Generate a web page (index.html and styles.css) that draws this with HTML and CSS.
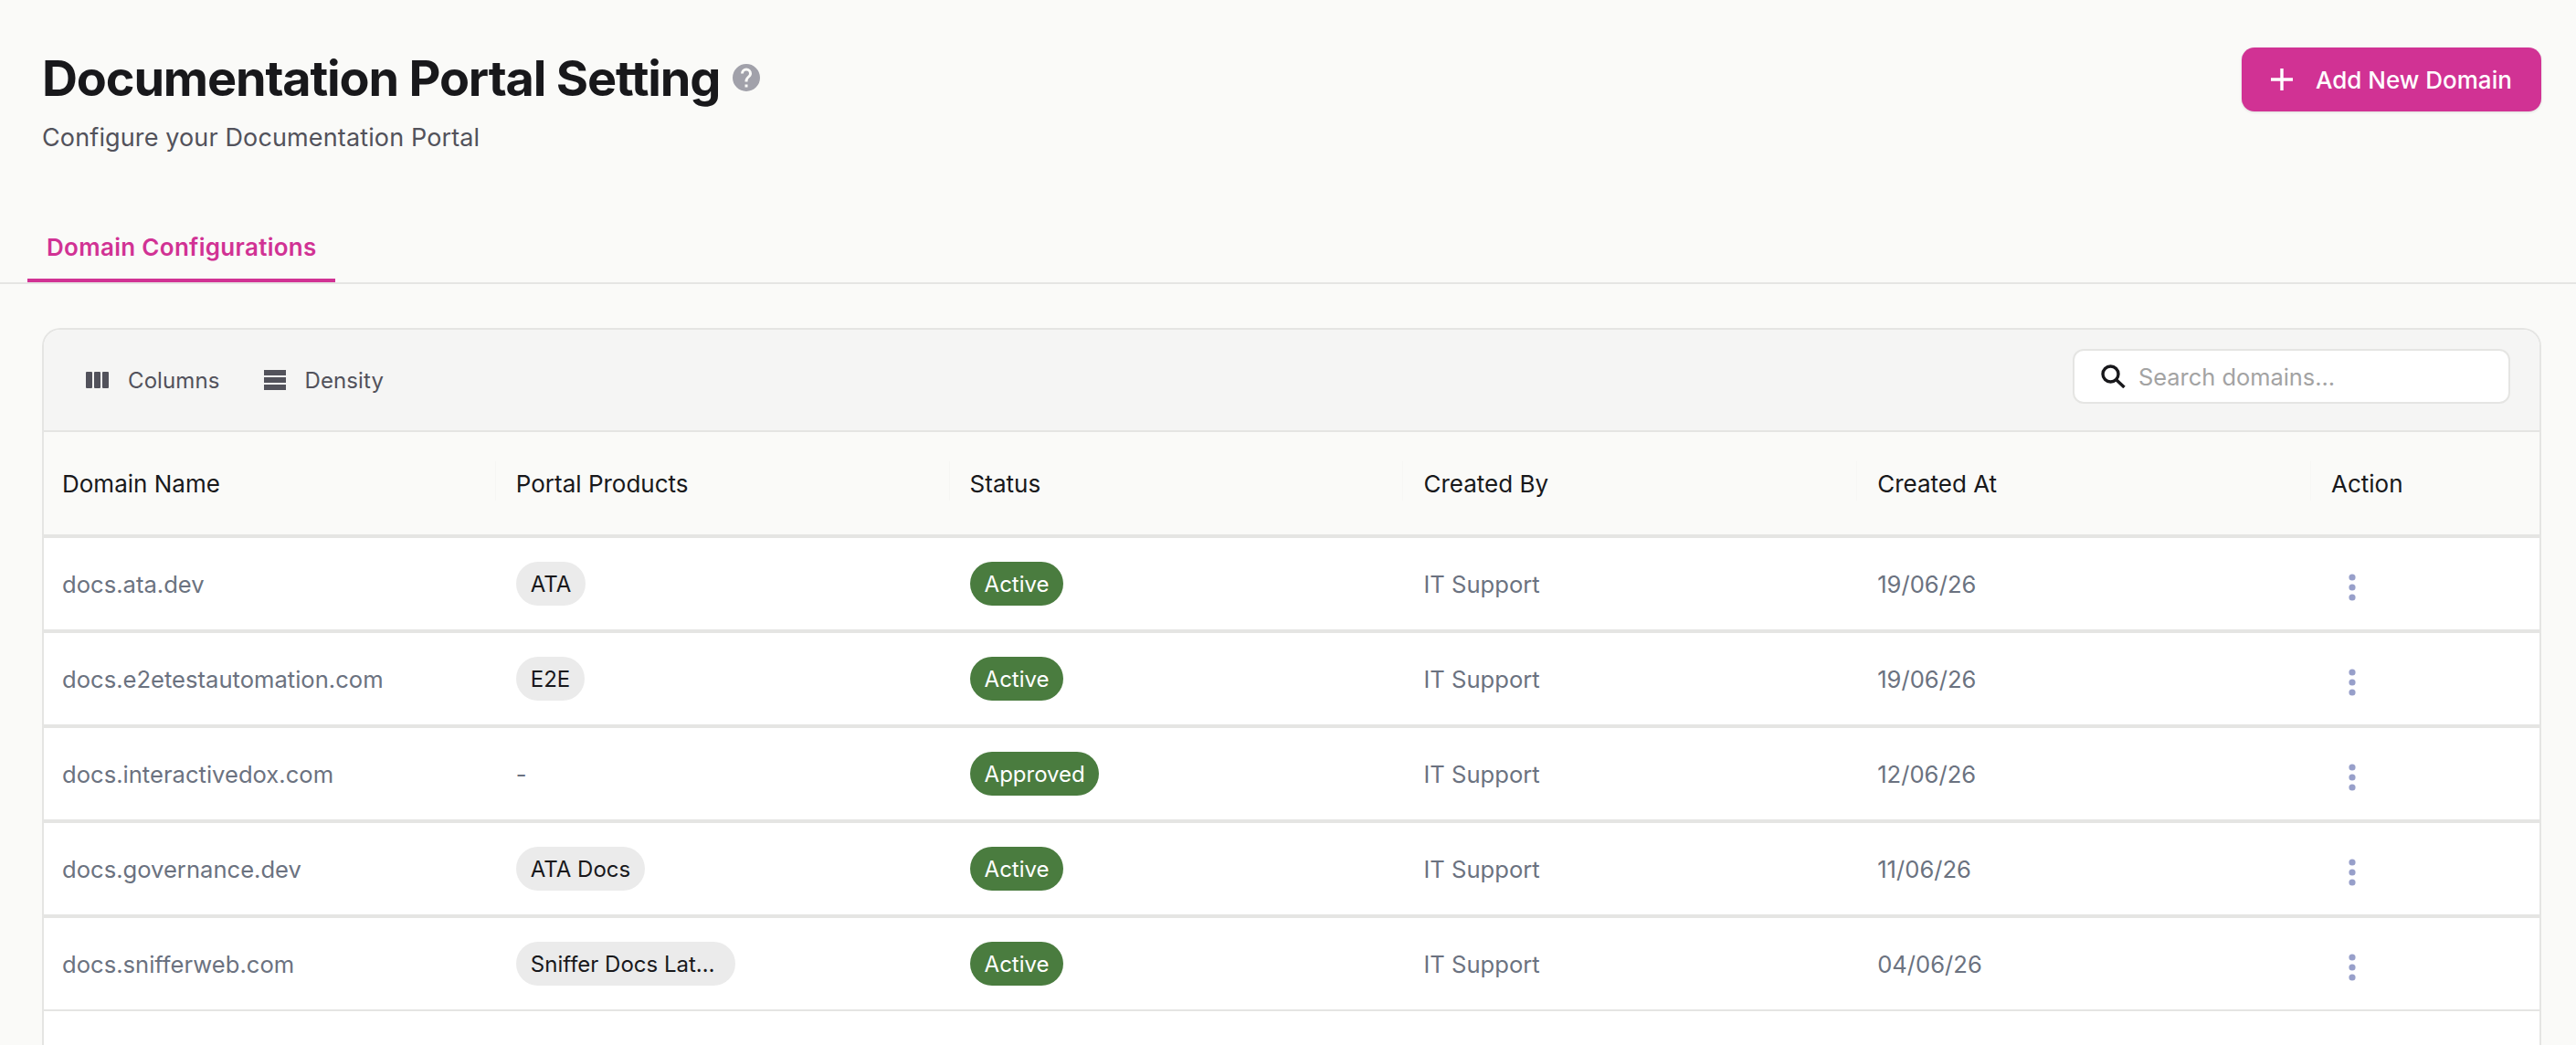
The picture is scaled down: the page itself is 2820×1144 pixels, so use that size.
FILE: index.html
```html
<!DOCTYPE html>
<html lang="en">
<head>
  <meta charset="UTF-8" />
  <title>Documentation Portal Setting</title>
  <link rel="stylesheet" href="styles.css">
</head>
<body>
  <header class="page-head">
    <div>
      <div class="title-row">
        <h1>Documentation Portal Setting</h1>
        <svg class="help-icon" viewBox="0 0 24 24"><path d="M12 2a10 10 0 1 0 0 20 10 10 0 0 0 0-20zm1 17h-2v-2h2v2zm2.07-7.75-.9.92C13.45 12.9 13 13.5 13 15h-2v-.5c0-1.1.45-2.1 1.17-2.83l1.24-1.26A2 2 0 0 0 14 9a2 2 0 0 0-4 0H8a4 4 0 0 1 8 0c0 .88-.36 1.68-.93 2.25z"/></svg>
      </div>
      <p class="subtitle">Configure your Documentation Portal</p>
    </div>
    <button class="add-btn">
      <svg class="plus-icon" viewBox="0 0 24 24"><path d="M12 0v24M0 12h24"/></svg>
      Add New Domain
    </button>
  </header>

  <nav class="tabs">
    <a class="tab active">Domain Configurations</a>
  </nav>

  <section class="card">
    <div class="toolbar">
      <div class="tool-group">
        <span class="tool">
          <svg class="tool-icon columns" viewBox="0 0 25 18"><rect width="7" height="18" rx="1"/><rect x="9" width="7" height="18" rx="1"/><rect x="18" width="7" height="18" rx="1"/></svg>
          Columns
        </span>
        <span class="tool">
          <svg class="tool-icon density" viewBox="0 0 24 22"><rect width="24" height="6"/><rect y="8" width="24" height="6"/><rect y="16" width="24" height="6"/></svg>
          Density
        </span>
      </div>
      <div class="search">
        <svg class="search-icon" viewBox="0 0 27 26"><circle cx="10.5" cy="10.5" r="8.5"/><path d="M17 17l8.5 8"/></svg>
        <span>Search domains...</span>
      </div>
    </div>

    <div class="row head">
      <div class="cell">Domain Name</div>
      <div class="cell">Portal Products</div>
      <div class="cell">Status</div>
      <div class="cell">Created By</div>
      <div class="cell">Created At</div>
      <div class="cell">Action</div>
    </div>

    <div id="rows"></div>
  </section>

  <script>
    const domains = [
      { name: "docs.ata.dev", product: "ATA", status: "Active", date: "19/06/26" },
      { name: "docs.e2etestautomation.com", product: "E2E", status: "Active", date: "19/06/26" },
      { name: "docs.interactivedox.com", product: "", status: "Approved", date: "12/06/26" },
      { name: "docs.governance.dev", product: "ATA Docs", status: "Active", date: "11/06/26" },
      { name: "docs.snifferweb.com", product: "Sniffer Docs Lat…", cut: true, status: "Active", date: "04/06/26" }
    ];

    const rows = document.getElementById('rows');

    domains.forEach(d => {
      const row = document.createElement('div');
      row.className = 'row';
      row.innerHTML = `
        <div class="cell">${d.name}</div>
        <div class="cell">${d.product ? `<span class="chip${d.cut ? ' chip-cut' : ''}">${d.product}</span>` : '-'}</div>
        <div class="cell"><span class="status">${d.status}</span></div>
        <div class="cell">IT Support</div>
        <div class="cell">${d.date}</div>
        <div class="cell"><svg class="dots" viewBox="0 0 8 30"><circle cx="4" cy="4" r="3.6"/><circle cx="4" cy="15" r="3.6"/><circle cx="4" cy="26" r="3.6"/></svg></div>
      `;
      rows.appendChild(row);
    });
  </script>
</body>
</html>
```

FILE: styles.css
```css
html, body {
  height: 100%;
  overflow: hidden;
}

body {
  margin: 0;
  font-family: Inter, "Liberation Sans", sans-serif;
  background: #fafaf8;
  color: #18181b;
}

.page-head {
  display: flex;
  justify-content: space-between;
  align-items: flex-start;
  padding: 52px 38px 0 46px;
  height: 205px;
  box-sizing: border-box;
}

.title-row {
  display: flex;
  align-items: center;
  gap: 11px;
  height: 66px;
}

h1 {
  margin: 0;
  font-size: 54px;
  font-weight: 700;
  letter-spacing: -1.17px;
  color: #18181b;
}

.help-icon {
  width: 36px;
  height: 36px;
  fill: #a1a1aa;
}

.subtitle {
  margin: 16px 0 0;
  font-size: 27px;
  letter-spacing: 0.13px;
  color: #52525b;
}

.add-btn {
  display: flex;
  align-items: center;
  gap: 25px;
  height: 70px;
  width: 328px;
  padding: 0 32px;
  border: none;
  border-radius: 14px;
  background: #d13294;
  color: #fff;
  font-family: inherit;
  font-size: 26px;
  font-weight: 500;
  box-shadow: 0 1px 3px rgba(0,0,0,0.12);
}

.plus-icon {
  width: 24px;
  height: 24px;
  stroke: #fff;
  stroke-width: 3.4;
  fill: none;
}

.tabs {
  display: flex;
  height: 106px;
  padding-left: 30px;
  border-bottom: 2px solid #e5e5e3;
  margin-top: -2px;
}

.tab {
  display: flex;
  align-items: center;
  height: 106px;
  padding: 33px 20px 0 21px;
  box-sizing: border-box;
  border-bottom: 4px solid #d13294;
  color: #d13294;
  font-size: 26px;
  font-weight: 600;
  letter-spacing: 0.3px;
}

.card {
  height: 785px;
  box-sizing: border-box;
  margin: 48px 38px 0 46px;
  border: 2px solid #e5e5e3;
  border-bottom: none;
  border-radius: 20px 20px 0 0;
  background: #fff;
  overflow: hidden;
}

.toolbar {
  display: flex;
  justify-content: space-between;
  height: 110px;
  padding: 0 32px 0 46px;
  background: #f5f5f4;
  border-bottom: 2px solid #e5e5e3;
}

.tool-group {
  display: flex;
  gap: 48px;
}

.tool {
  display: flex;
  align-items: center;
  gap: 21px;
  font-size: 24px;
  letter-spacing: 0.1px;
  color: #52525b;
}

.tool-icon {
  fill: #52525b;
}

.columns {
  width: 25px;
  height: 18px;
}

.density {
  width: 24px;
  height: 22px;
}

.search {
  display: flex;
  align-items: center;
  gap: 14px;
  width: 479px;
  height: 60px;
  margin-top: 21px;
  padding-left: 29px;
  box-sizing: border-box;
  border: 2px solid #e5e5e3;
  border-radius: 12px;
  background: #fff;
  font-size: 25.4px;
  color: #a3a3a3;
}

.search-icon {
  width: 27px;
  height: 26px;
  fill: none;
  stroke: #18181b;
  stroke-width: 3.4;
}

.row {
  display: grid;
  grid-template-columns: repeat(5, 496.8px) 1fr;
  height: 100px;
  background: #fff;
  border-bottom: 4px solid #e5e5e3;
  font-size: 25.6px;
  color: #6b7280;
}

.row:last-child {
  border-bottom-width: 2px;
}

.row.head {
  height: 112px;
  background: #fafaf8;
  color: #18181b;
  font-size: 26px;
}

.cell {
  display: flex;
  align-items: center;
  padding-left: 20px;
  overflow: hidden;
  white-space: nowrap;
}

.head .cell {
  position: relative;
}

.head .cell::after {
  content: "";
  position: absolute;
  right: 2px;
  top: 32px;
  height: 43px;
  border-right: 1px solid #f6f6f4;
}

.head .cell:last-child::after {
  display: none;
}

.chip {
  display: flex;
  align-items: center;
  height: 48px;
  padding: 0 16px;
  border-radius: 24px;
  background: #ebebeb;
  color: #18181b;
  font-size: 24px;
}

.chip-cut {
  padding-right: 22px;
}

.status {
  display: flex;
  align-items: center;
  height: 48px;
  padding: 0 15px 0 16px;
  border-radius: 24px;
  background: #4a7c3f;
  color: #fff;
  font-size: 24px;
}

.dots {
  width: 8px;
  height: 30px;
  margin: 8px 0 0 19px;
  fill: #979fca;
}
```
